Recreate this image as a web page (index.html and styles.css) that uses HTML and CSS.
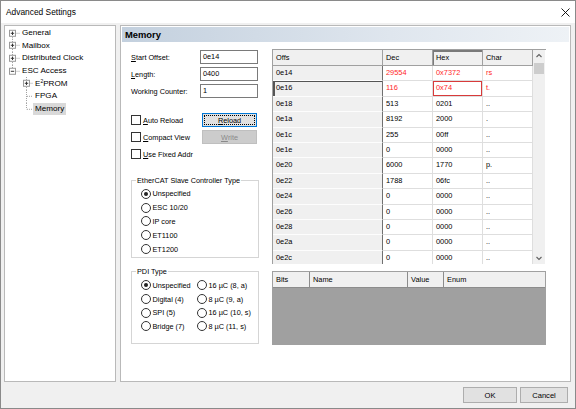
FILE: index.html
```html
<!DOCTYPE html>
<html>
<head>
<meta charset="utf-8">
<link rel="stylesheet" href="styles.css">
</head>
<body>
<div class="window">
  <div class="titlebar">
    <span class="title">Advanced Settings</span>
    <svg class="close" width="9" height="9" viewBox="0 0 9 9"><path d="M0.5 0.5L8.5 8.5M8.5 0.5L0.5 8.5" stroke="#000" stroke-width="0.9"/></svg>
  </div>
  <div class="main">
    <div class="tree">
      <div class="trow"><svg width="15" height="12.67" viewBox="0 0 15 12.67"><path d="M7.5 6.3V12.67M10.5 6.3H15" stroke="#a0a0a0" stroke-dasharray="1 1"/><rect x="4.5" y="3.3" width="6" height="6" fill="#fff" stroke="#9a9a9a"/><path d="M5.8 6.3H9.2M7.5 4.6V8" stroke="#333"/></svg><span class="tl">General</span></div>
      <div class="trow"><svg width="15" height="12.67" viewBox="0 0 15 12.67"><path d="M7.5 0V12.67M10.5 6.3H15" stroke="#a0a0a0" stroke-dasharray="1 1"/><rect x="4.5" y="3.3" width="6" height="6" fill="#fff" stroke="#9a9a9a"/><path d="M5.8 6.3H9.2M7.5 4.6V8" stroke="#333"/></svg><span class="tl">Mailbox</span></div>
      <div class="trow"><svg width="15" height="12.67" viewBox="0 0 15 12.67"><path d="M7.5 0V12.67M10.5 6.3H15" stroke="#a0a0a0" stroke-dasharray="1 1"/><rect x="4.5" y="3.3" width="6" height="6" fill="#fff" stroke="#9a9a9a"/><path d="M5.8 6.3H9.2M7.5 4.6V8" stroke="#333"/></svg><span class="tl">Distributed Clock</span></div>
      <div class="trow"><svg width="15" height="12.67" viewBox="0 0 15 12.67"><path d="M7.5 0V6.3M10.5 6.3H15" stroke="#a0a0a0" stroke-dasharray="1 1"/><rect x="4.5" y="3.3" width="6" height="6" fill="#fff" stroke="#9a9a9a"/><path d="M5.8 6.3H9.2" stroke="#333"/></svg><span class="tl">ESC Access</span></div>
      <div class="trow"><svg width="28" height="12.67" viewBox="0 0 28 12.67"><path d="M21.5 0V12.67M24.5 6.3H28" stroke="#a0a0a0" stroke-dasharray="1 1"/><rect x="18.5" y="3.3" width="6" height="6" fill="#fff" stroke="#9a9a9a"/><path d="M19.8 6.3H23.2M21.5 4.6V8" stroke="#333"/></svg><span class="tl">E<sup>2</sup>PROM</span></div>
      <div class="trow"><svg width="28" height="12.67" viewBox="0 0 28 12.67"><path d="M21.5 0V12.67M22 6.3H28" stroke="#a0a0a0" stroke-dasharray="1 1"/></svg><span class="tl">FPGA</span></div>
      <div class="trow"><svg width="28" height="12.67" viewBox="0 0 28 12.67"><path d="M21.5 0V6.3M22 6.3H28" stroke="#a0a0a0" stroke-dasharray="1 1"/></svg><span class="tl sel">Memory</span></div>
    </div>
    <div class="panel">
      <div class="phead">Memory</div>
      <div class="pbody">
        <div class="formcol">
          <div class="fields">
            <div class="field"><span class="flabel"><u>S</u>tart Offset:</span><div class="input">0e14</div></div>
            <div class="field"><span class="flabel"><u>L</u>ength:</span><div class="input">0400</div></div>
            <div class="field"><span class="flabel">Working Counter:</span><div class="input">1</div></div>
          </div>
          <div class="checks">
            <div class="crow"><span class="clabel"><span class="cbox"></span><u>A</u>uto Reload</span><div class="btn focus"><span class="focusring"><u>R</u>eload</span></div></div>
            <div class="crow"><span class="clabel"><span class="cbox"></span><u>C</u>ompact View</span><div class="btn disabled"><u>W</u>rite</div></div>
            <div class="crow"><span class="clabel"><span class="cbox"></span><u>U</u>se Fixed Addr</span></div>
          </div>
          <fieldset class="group g1">
            <legend>EtherCAT Slave Controller Type</legend>
            <div class="rrow"><span class="radio on"></span>Unspecified</div>
            <div class="rrow"><span class="radio"></span>ESC 10/20</div>
            <div class="rrow"><span class="radio"></span>IP core</div>
            <div class="rrow"><span class="radio"></span>ET1100</div>
            <div class="rrow"><span class="radio"></span>ET1200</div>
          </fieldset>
          <fieldset class="group g2">
            <legend>PDI Type</legend>
            <div class="pdi">
              <div class="rrow"><span class="radio on"></span>Unspecified</div>
              <div class="rrow"><span class="radio"></span>16 µC (8, a)</div>
              <div class="rrow"><span class="radio"></span>Digital (4)</div>
              <div class="rrow"><span class="radio"></span>8 µC (9, a)</div>
              <div class="rrow"><span class="radio"></span>SPI (5)</div>
              <div class="rrow"><span class="radio"></span>16 µC (10, s)</div>
              <div class="rrow"><span class="radio"></span>Bridge (7)</div>
              <div class="rrow"><span class="radio"></span>8 µC (11, s)</div>
            </div>
          </fieldset>
        </div>
        <div class="gridcol">
          <div class="mtable">
            <div class="cols">
              <div class="hrow"><div class="hc woff">Offs</div><div class="hc wn">Dec</div><div class="hc wn curcol">Hex</div><div class="hc wn">Char</div></div>
              <div class="row"><div class="rh woff">0e14</div><div class="dc wn red">29554</div><div class="dc wn red">0x7372</div><div class="dc wn red">rs</div></div>
              <div class="row"><div class="rh woff currow">0e16</div><div class="dc wn red">116</div><div class="dc wn red focuscell">0x74</div><div class="dc wn red">t.</div></div>
              <div class="row"><div class="rh woff">0e18</div><div class="dc wn">513</div><div class="dc wn">0201</div><div class="dc wn">..</div></div>
              <div class="row"><div class="rh woff">0e1a</div><div class="dc wn">8192</div><div class="dc wn">2000</div><div class="dc wn">.</div></div>
              <div class="row"><div class="rh woff">0e1c</div><div class="dc wn">255</div><div class="dc wn">00ff</div><div class="dc wn">..</div></div>
              <div class="row"><div class="rh woff">0e1e</div><div class="dc wn">0</div><div class="dc wn">0000</div><div class="dc wn">..</div></div>
              <div class="row"><div class="rh woff">0e20</div><div class="dc wn">6000</div><div class="dc wn">1770</div><div class="dc wn">p.</div></div>
              <div class="row"><div class="rh woff">0e22</div><div class="dc wn">1788</div><div class="dc wn">06fc</div><div class="dc wn">..</div></div>
              <div class="row"><div class="rh woff">0e24</div><div class="dc wn">0</div><div class="dc wn">0000</div><div class="dc wn">..</div></div>
              <div class="row"><div class="rh woff">0e26</div><div class="dc wn">0</div><div class="dc wn">0000</div><div class="dc wn">..</div></div>
              <div class="row"><div class="rh woff">0e28</div><div class="dc wn">0</div><div class="dc wn">0000</div><div class="dc wn">..</div></div>
              <div class="row"><div class="rh woff">0e2a</div><div class="dc wn">0</div><div class="dc wn">0000</div><div class="dc wn">..</div></div>
              <div class="row"><div class="rh woff">0e2c</div><div class="dc wn">0</div><div class="dc wn">0000</div><div class="dc wn">..</div></div>
            </div>
            <div class="sb">
              <div class="sbarrow"><svg width="12" height="12" viewBox="0 0 12 12"><path d="M3.5 7L6 4.5L8.5 7" fill="none" stroke="#606060" stroke-width="1.1"/></svg></div>
              <div class="thumb"></div>
              <div class="sbspace"></div>
              <div class="sbarrow"><svg width="12" height="12" viewBox="0 0 12 12"><path d="M3.5 5L6 7.5L8.5 5" fill="none" stroke="#606060" stroke-width="1.1"/></svg></div>
            </div>
          </div>
          <div class="btable">
            <div class="bhead"><div class="bh wbits">Bits</div><div class="bh wname">Name</div><div class="bh wval">Value</div><div class="bh wenum">Enum</div></div>
            <div class="bbody"></div>
          </div>
        </div>
      </div>
    </div>
  </div>
  <div class="footer">
    <div class="dbtn ok">OK</div>
    <div class="dbtn cancel">Cancel</div>
  </div>
</div>
</body>
</html>
```
FILE: styles.css
```css
* { box-sizing: border-box; }
html, body { margin: 0; padding: 0; }
body {
  width: 576px;
  height: 409px;
  overflow: hidden;
  font-family: "Liberation Sans", Arial, sans-serif;
  color: #000;
}
.window {
  width: 576px;
  height: 409px;
  border: 1px solid #8a8a8a;
  background: #f0f0f0;
  display: flex;
  flex-direction: column;
}
.titlebar {
  height: 22px;
  flex: none;
  background: #fff;
  display: flex;
  align-items: center;
  justify-content: space-between;
  padding: 0 5px 0 5px;
}
.title { font-size: 8.4px; }
.close { display: block; }

.main {
  flex: none;
  display: flex;
  gap: 4px;
  padding: 2px 0 0 3px;
  height: 359px;
}
.tree {
  width: 112px;
  height: 357px;
  background: #fff;
  border: 1px solid #b9b9b9;
  padding-top: 0.7px;
}
.trow {
  height: 12.67px;
  display: flex;
  align-items: center;
  font-size: 8.1px;
}
.trow svg { display: block; flex: none; }
.tl {
  padding: 0 2px;
  line-height: 12px;
  white-space: nowrap;
}
.tl sup { font-size: 5px; vertical-align: 3px; line-height: 0; }
.tl.sel { background: #d9d9d9; }

.panel {
  width: 451px;
  height: 357px;
  background: #fff;
  border: 1px solid #b9b9b9;
  padding: 1px;
}
.phead {
  height: 15px;
  line-height: 15px;
  padding-left: 3px;
  font-weight: bold;
  font-size: 9.4px;
  background: linear-gradient(to right, #c3d0de, #dfe6ee 60%, #eef2f6);
}
.pbody {
  display: flex;
  align-items: flex-start;
}
.formcol {
  margin-left: 9px;
  width: 128px;
  font-size: 7.3px;
}
.fields {
  margin-top: 8px;
  display: flex;
  flex-direction: column;
  gap: 3px;
}
.field {
  height: 14px;
  display: flex;
  align-items: center;
}
.flabel { width: 69px; white-space: nowrap; }
.input {
  width: 58px;
  height: 14px;
  border: 1px solid #7a7a7a;
  background: #fff;
  padding-left: 2px;
  line-height: 12px;
}
.checks {
  margin-top: 15px;
  display: flex;
  flex-direction: column;
  gap: 3px;
}
.crow {
  height: 14px;
  display: flex;
  align-items: center;
}
.clabel {
  width: 71px;
  display: flex;
  align-items: center;
  white-space: nowrap;
}
.cbox {
  width: 10px;
  height: 10px;
  border: 1px solid #333;
  background: #fff;
  margin-right: 2px;
  flex: none;
}
.btn {
  width: 55px;
  height: 14px;
  display: flex;
  align-items: center;
  justify-content: center;
  background: #e1e1e1;
  border: 1px solid #adadad;
}
.btn.focus {
  border-color: #0078d7;
  padding: 1px;
}
.focusring {
  width: 100%;
  height: 100%;
  border: 1px dotted #000;
  display: flex;
  align-items: center;
  justify-content: center;
}
.btn.disabled {
  background: #cccccc;
  border-color: #bfbfbf;
  color: #8a8a8a;
}
.group {
  margin: 0;
  width: 128px;
  min-width: 0;
  border: 1px solid #d5d5d5;
}
.group legend {
  padding: 0 1px;
  margin-left: 4px;
  line-height: 9px;
  font-size: 7.3px;
}
.g1 {
  margin-top: 14.5px;
  padding: 2.5px 0 1px 0;
}
.g1 .rrow { height: 13.8px; padding-left: 9px; }
.g2 {
  margin-top: 9px;
  padding: 2.5px 0 10px 0;
}
.pdi {
  display: grid;
  grid-template-columns: 56px auto;
  padding-left: 9px;
}
.pdi .rrow { height: 13.7px; }
.rrow {
  display: flex;
  align-items: center;
  white-space: nowrap;
}
.radio {
  width: 10px;
  height: 10px;
  border: 1px solid #333;
  border-radius: 50%;
  background: #fff;
  margin-right: 1.5px;
  flex: none;
  display: flex;
  align-items: center;
  justify-content: center;
}
.radio.on::after {
  content: "";
  width: 4px;
  height: 4px;
  border-radius: 50%;
  background: #222;
}

.gridcol {
  margin-left: 13px;
  margin-top: 7px;
  width: 274px;
  font-size: 7.4px;
}
.mtable {
  display: flex;
  height: 215px;
  border-top: 1px solid #a0a0a0;
  border-left: 1px solid #a0a0a0;
  overflow: hidden;
}
.cols {
  width: 260px;
  overflow: hidden;
}
.hrow { display: flex; height: 16px; }
.hc {
  background: #f0f0f0;
  border-right: 1px solid #a0a0a0;
  border-bottom: 1px solid #a0a0a0;
  padding-left: 3px;
  line-height: 15px;
}
.hc.curcol { box-shadow: inset 1px 2px 0 #7a7a7a; }
.woff { width: 110px; flex: none; }
.wn { width: 50px; flex: none; }
.row { display: flex; height: 15.4px; }
.rh, .dc {
  padding-left: 3px;
  line-height: 14.4px;
  white-space: nowrap;
}
.rh {
  background: #f0f0f0;
  border-right: 1px solid #707070;
  border-bottom: 1px solid #fdfdfd;
}
.rh.currow { box-shadow: inset 2px 1px 0 #555; }
.dc {
  background: #fff;
  border-right: 1px solid #dedede;
  border-bottom: 1px solid #dedede;
}
.red { color: #ff1f1f; }
.focuscell { box-shadow: inset 0 0 0 1px #d83a3a; }
.sb {
  width: 12px;
  flex: none;
  background: #f0f0f0;
  display: flex;
  flex-direction: column;
}
.sbarrow { height: 12px; flex: none; }
.sbarrow svg { display: block; }
.thumb {
  height: 11px;
  margin: 1px 1px 0 1px;
  background: #cdcdcd;
  flex: none;
}
.sbspace { flex: 1; }

.btable {
  margin-top: 7px;
  height: 74px;
  border: 1px solid #a0a0a0;
  display: flex;
  flex-direction: column;
}
.bhead { display: flex; height: 16px; flex: none; }
.bh {
  background: #f0f0f0;
  border-right: 1px solid #8c8c8c;
  border-bottom: 1px solid #8c8c8c;
  padding-left: 3px;
  line-height: 15px;
}
.wbits { width: 37px; }
.wname { width: 98px; }
.wval { width: 36px; }
.wenum { flex: 1; border-right: none; }
.bbody {
  flex: 1;
  background: #a0a0a0;
}

.footer {
  flex: none;
  display: flex;
  justify-content: flex-end;
  gap: 3px;
  padding: 5px 7px 0 0;
}
.dbtn {
  height: 16px;
  background: #e1e1e1;
  border: 1px solid #adadad;
  font-size: 7.6px;
  display: flex;
  align-items: center;
  justify-content: center;
}
.ok { width: 54px; }
.cancel { width: 48px; }
```
